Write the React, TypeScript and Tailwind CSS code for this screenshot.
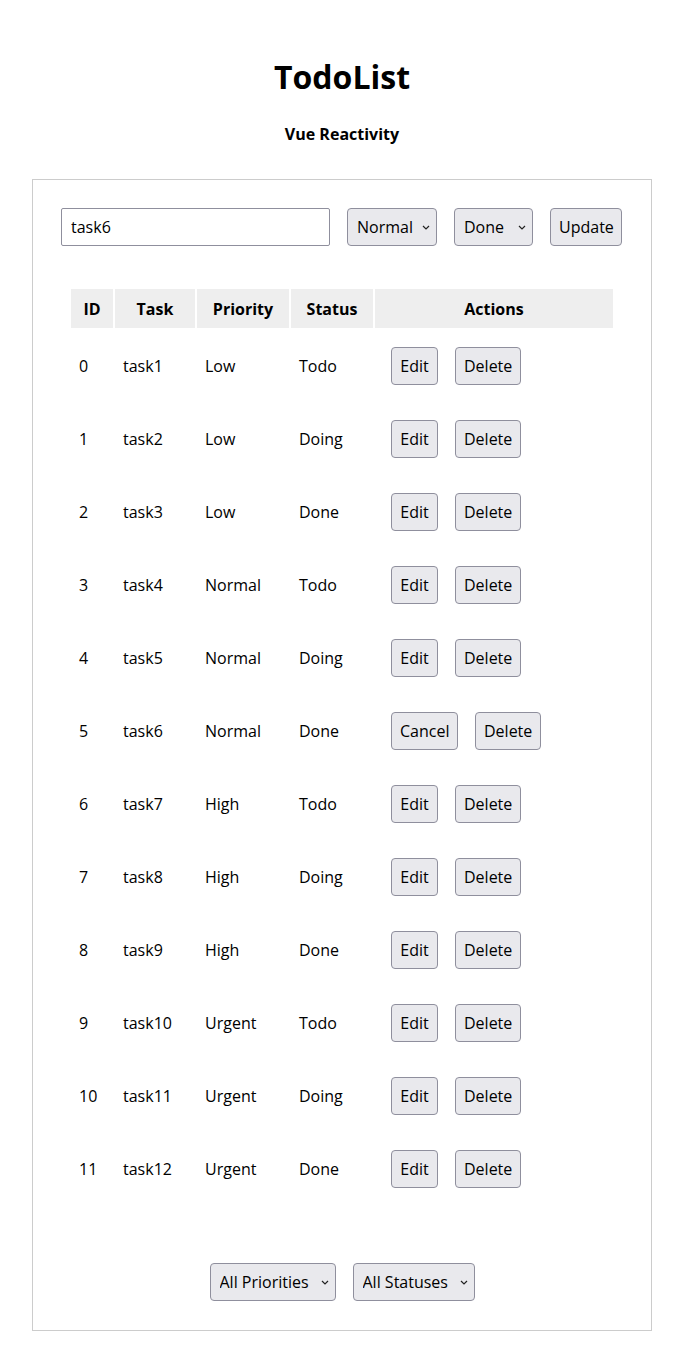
import React from "react";

const tasks = [
  { id: 0, task: "task1", priority: "Low", status: "Todo" },
  { id: 1, task: "task2", priority: "Low", status: "Doing" },
  { id: 2, task: "task3", priority: "Low", status: "Done" },
  { id: 3, task: "task4", priority: "Normal", status: "Todo" },
  { id: 4, task: "task5", priority: "Normal", status: "Doing" },
  { id: 5, task: "task6", priority: "Normal", status: "Done" },
  { id: 6, task: "task7", priority: "High", status: "Todo" },
  { id: 7, task: "task8", priority: "High", status: "Doing" },
  { id: 8, task: "task9", priority: "High", status: "Done" },
  { id: 9, task: "task10", priority: "Urgent", status: "Todo" },
  { id: 10, task: "task11", priority: "Urgent", status: "Doing" },
  { id: 11, task: "task12", priority: "Urgent", status: "Done" },
];

const btn =
  "h-[38px] px-[8px] rounded-[4px] border border-[#8f8f9d] bg-[#e9e9ed] text-[16px] leading-[24px] text-black";

function Select({ value, options, w }: { value: string; options: string[]; w: string }) {
  return (
    <div className={`relative ${w}`}>
      <select
        defaultValue={value}
        className="appearance-none w-full h-[38px] pl-[9px] pr-[22px] rounded-[4px] border border-[#8f8f9d] bg-[#e9e9ed] text-[16px] leading-[24px] text-black outline-none"
      >
        {options.map((o) => (
          <option key={o}>{o}</option>
        ))}
      </select>
      <svg
        className="pointer-events-none absolute right-[7px] top-[17px]"
        width="8"
        height="5"
        viewBox="0 0 8 5"
        fill="none"
      >
        <path d="M1 1l3 3 3-3" stroke="#222" strokeWidth="1.2" />
      </svg>
    </div>
  );
}

export default function App() {
  return (
    <div
      className="min-h-[1363px] bg-white text-black pt-[53px] px-[32px]"
      style={{ fontFamily: '"Open Sans", "Noto Sans", sans-serif' }}
    >
      <h1 className="text-center text-[32px] leading-[48px] font-bold">TodoList</h1>
      <h2 className="text-center text-[16px] leading-[24px] font-bold mt-[21px]">Vue Reactivity</h2>
      <div className="mt-[33px] border border-[#cccccc] px-[28px] pt-[28px] pb-[29px]">
        <div className="flex gap-[17px]">
          <input
            defaultValue="task6"
            className="w-[269px] h-[38px] px-[9px] border border-[#8f8f9d] rounded-[2px] text-[16px] outline-none"
          />
          <Select value="Normal" options={["Low", "Normal", "High", "Urgent"]} w="w-[90px]" />
          <Select value="Done" options={["Todo", "Doing", "Done"]} w="w-[79px]" />
          <button className={`${btn} w-[72px]`}>Update</button>
        </div>
        <table className="mx-auto mt-[41px] border-separate border-spacing-[2px] text-[16px] leading-[24px]">
          <thead>
            <tr className="h-[39px] bg-white">
              <th className="w-[42px] bg-[#eeeeee] font-bold">ID</th>
              <th className="w-[80px] bg-[#eeeeee] font-bold">Task</th>
              <th className="w-[92px] bg-[#eeeeee] font-bold">Priority</th>
              <th className="w-[82px] bg-[#eeeeee] font-bold">Status</th>
              <th className="w-[238px] bg-[#eeeeee] font-bold">Actions</th>
            </tr>
          </thead>
          <tbody>
            {tasks.map((t) => (
              <tr key={t.id} className="h-[71px]">
                <td className="pl-[8px]">{t.id}</td>
                <td className="pl-[8px]">{t.task}</td>
                <td className="pl-[8px]">{t.priority}</td>
                <td className="pl-[8px]">{t.status}</td>
                <td className="pl-[16px]">
                  <div className="flex gap-[17px]">
                    <button className={`${btn} ${t.id === 5 ? "w-[67px]" : "w-[47px]"}`}>
                      {t.id === 5 ? "Cancel" : "Edit"}
                    </button>
                    <button className={`${btn} w-[66px]`}>Delete</button>
                  </div>
                </td>
              </tr>
            ))}
          </tbody>
        </table>
        <div className="flex justify-center gap-[17px] mt-[57px]">
          <Select value="All Priorities" options={["All Priorities", "Low", "Normal", "High", "Urgent"]} w="w-[126px]" />
          <Select value="All Statuses" options={["All Statuses", "Todo", "Doing", "Done"]} w="w-[122px]" />
        </div>
      </div>
    </div>
  );
}
